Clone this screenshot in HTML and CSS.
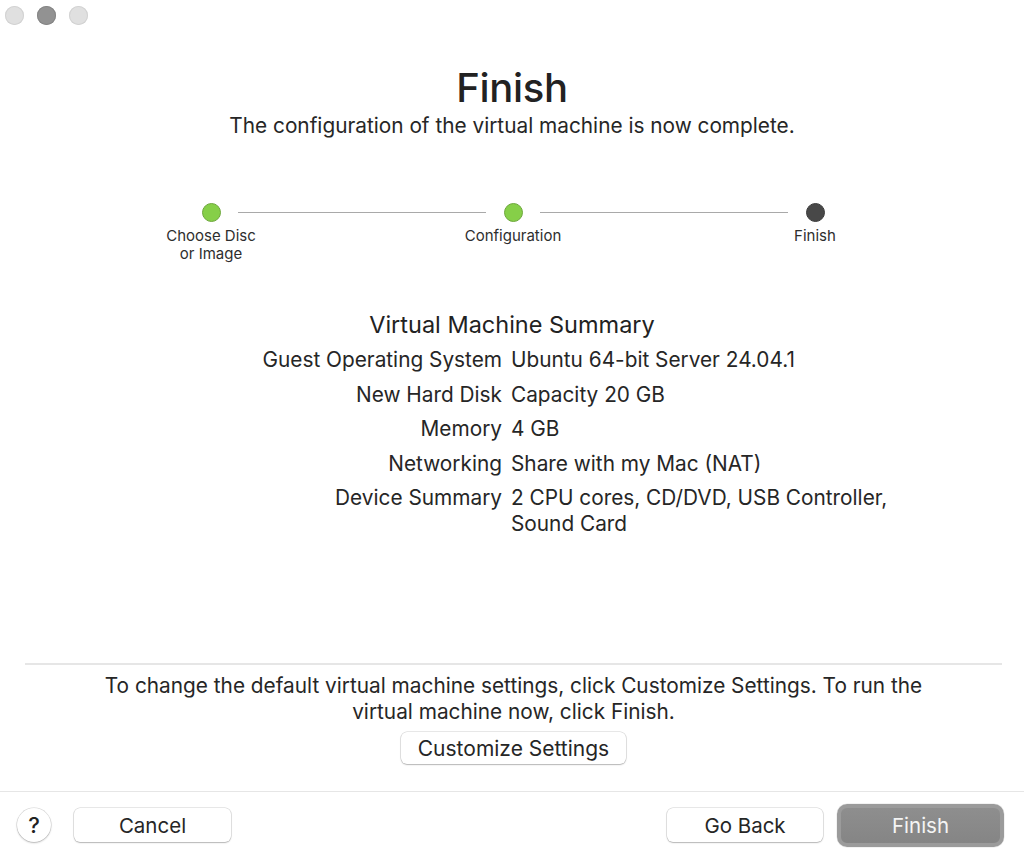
FILE: index.html
```html
<!DOCTYPE html>
<html>
<head>
<meta charset="utf-8">
<link rel="stylesheet" href="styles.css">
</head>
<body>
<div class="window">
  <div class="titlebar">
    <span class="light"></span>
    <span class="light dark"></span>
    <span class="light"></span>
  </div>
  <header class="header">
    <h1 class="title">Finish</h1>
    <p class="subtitle">The configuration of the virtual machine is now complete.</p>
  </header>
  <div class="steps">
    <span class="dot done"></span>
    <span class="line"></span>
    <span class="dot done"></span>
    <span class="line"></span>
    <span class="dot current"></span>
    <span class="step-label">Choose Disc<br>or Image</span>
    <span></span>
    <span class="step-label">Configuration</span>
    <span></span>
    <span class="step-label">Finish</span>
  </div>
  <section class="summary">
    <h2 class="summary-title">Virtual Machine Summary</h2>
    <div class="summary-grid">
      <div class="key">Guest Operating System</div><div class="val">Ubuntu 64-bit Server 24.04.1</div>
      <div class="key">New Hard Disk</div><div class="val">Capacity 20 GB</div>
      <div class="key">Memory</div><div class="val">4 GB</div>
      <div class="key">Networking</div><div class="val">Share with my Mac (NAT)</div>
      <div class="key">Device Summary</div><div class="val">2 CPU cores, CD/DVD, USB Controller, Sound Card</div>
    </div>
  </section>
  <div class="spacer"></div>
  <div class="note-area">
    <p class="note">To change the default virtual machine settings, click Customize Settings. To run the virtual machine now, click Finish.</p>
    <button class="btn customize">Customize Settings</button>
  </div>
  <footer class="footer">
    <button class="help">?</button>
    <button class="btn cancel">Cancel</button>
    <div class="footer-gap"></div>
    <button class="btn goback">Go Back</button>
    <button class="btn primary">Finish</button>
  </footer>
</div>
</body>
</html>
```

FILE: styles.css
```css
html, body {
  margin: 0;
  padding: 0;
  background: #ffffff;
}
body {
  font-family: Inter, "Noto Sans", "Liberation Sans", sans-serif;
  color: #262626;
}
.window {
  width: 1024px;
  height: 858px;
  display: flex;
  flex-direction: column;
  overflow: hidden;
}
.titlebar {
  height: 29px;
  display: flex;
  align-items: center;
  gap: 13px;
  padding-left: 5px;
  padding-top: 1px;
  box-sizing: border-box;
}
.light {
  width: 19px;
  height: 19px;
  border-radius: 50%;
  background: #e0e0e0;
  box-shadow: inset 0 0 0 1px #d2d2d2;
}
.light.dark {
  background: #929292;
  box-shadow: inset 0 0 0 1px #868686;
}
.header {
  text-align: center;
}
.title {
  margin: 35px 0 0;
  font-size: 40px;
  font-weight: 500;
  line-height: 48px;
  letter-spacing: -0.3px;
  color: #222;
}
.subtitle {
  margin: 0;
  font-size: 20.8px;
  line-height: 28px;
  color: #262626;
}
.steps {
  margin-top: 63px;
  margin-left: 161px;
  width: 704px;
  display: grid;
  grid-template-columns: 100px 1fr 100px 1fr 100px;
  align-items: center;
  justify-items: center;
}
.dot {
  width: 19px;
  height: 19px;
  border-radius: 50%;
  box-sizing: border-box;
}
.dot.done {
  background: #86cf48;
  border: 1px solid #6ea83d;
}
.dot.current {
  background: #484848;
  border: 1px solid #3c3c3c;
}
.line {
  justify-self: stretch;
  height: 1.5px;
  background: #a9a9a9;
  margin: 0 -23px;
}
.step-label {
  align-self: start;
  margin-top: 5px;
  font-size: 15px;
  line-height: 18px;
  text-align: center;
  white-space: nowrap;
  color: #2e2e2e;
}
.summary {
  margin-top: 47px;
}
.summary-title {
  margin: 0 0 7px;
  text-align: center;
  font-size: 23.5px;
  font-weight: 400;
  line-height: 30px;
  color: #222;
}
.summary-grid {
  display: grid;
  grid-template-columns: 1fr 1fr;
  column-gap: 9px;
  row-gap: 8.5px;
  padding-right: 11px;
  font-size: 20.8px;
  line-height: 26px;
}
.key {
  text-align: right;
  white-space: nowrap;
}
.val {
  max-width: 390px;
}
.spacer {
  flex: 1;
}
.note-area {
  margin: 0 22px 0 25px;
  border-top: 2px solid #e6e6e6;
  padding-top: 8px;
  display: flex;
  flex-direction: column;
  align-items: center;
  padding-bottom: 27px;
}
.note {
  margin: 0;
  max-width: 850px;
  text-align: center;
  font-size: 20.8px;
  line-height: 26px;
}
.btn {
  font-family: inherit;
  font-size: 20.5px;
  color: #262626;
  background: #ffffff;
  border: none;
  border-radius: 6px;
  box-shadow: 0 0 0 0.5px rgba(0,0,0,0.18), 0 1px 1.5px rgba(0,0,0,0.22);
  height: 33px;
  padding: 0;
}
.customize {
  margin-top: 7px;
  width: 225px;
  height: 32px;
  font-size: 21px;
}
.footer {
  border-top: 1px solid #e6e6e6;
  height: 67px;
  box-sizing: border-box;
  display: flex;
  align-items: center;
  padding: 0 20px 0 17px;
}
.help {
  width: 34px;
  height: 34px;
  border-radius: 50%;
  border: none;
  background: #fff;
  box-shadow: 0 0 0 0.5px rgba(0,0,0,0.16), 0 1px 2px rgba(0,0,0,0.22);
  font-family: inherit;
  font-size: 22px;
  font-weight: 500;
  color: #222;
  padding: 0;
  margin-right: 23px;
}
.cancel {
  width: 157px;
  height: 34px;
}
.footer-gap {
  flex: 1;
}
.goback {
  width: 156px;
  height: 34px;
  margin-right: 14px;
}
.primary {
  width: 167px;
  height: 43px;
  border-radius: 10px;
  background: linear-gradient(#8e8e8e, #858585);
  border: 4px solid #9b9b9b;
  box-sizing: border-box;
  box-shadow: 0 0 0 0.5px rgba(0,0,0,0.1);
  color: #f4f4f4;
}
```
